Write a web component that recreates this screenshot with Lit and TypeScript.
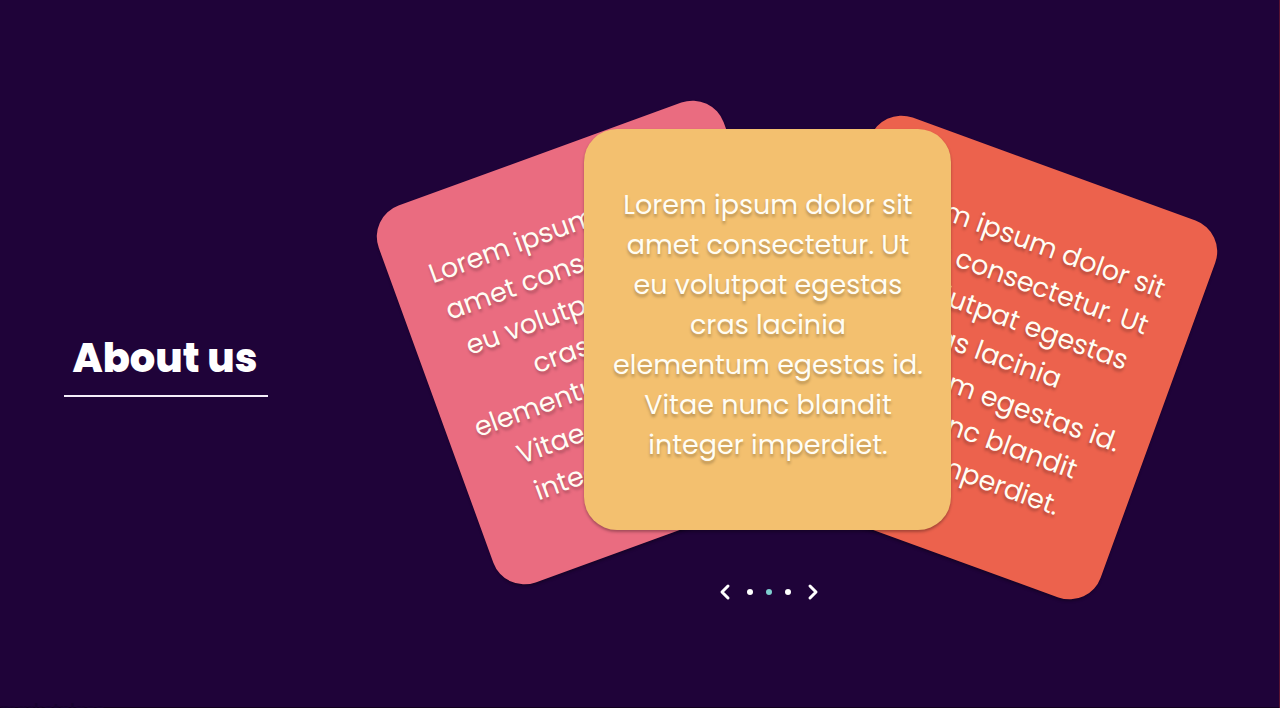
import { LitElement, html, css } from "lit";
import { customElement, property, state } from "lit/decorators.js";
import { classMap } from "lit/directives/class-map.js";

const COPY =
  "Lorem ipsum dolor sit amet consectetur. Ut eu volutpat egestas cras lacinia elementum egestas id. Vitae nunc blandit integer imperdiet.";

@customElement("about-card")
class AboutCard extends LitElement {
  @property() text = "";

  static styles = css`
    :host {
      box-sizing: border-box;
      display: block;
      width: 367px;
      min-height: 401px;
      padding: 56px 24px 64px;
      border-radius: 33px;
      box-shadow: 0 2px 3px rgba(0, 0, 0, 0.3);
    }
    p {
      margin: 0;
      color: #fffdf4;
      font: 400 27px/40px Poppins, Inter, sans-serif;
      text-align: center;
      text-shadow: 0 3px 3px rgba(0, 0, 0, 0.25);
    }
  `;

  render() {
    return html`<p>${this.text}</p>`;
  }
}

@customElement("app-root")
class AppRoot extends LitElement {
  @state() active = 1;

  static styles = css`
    :host {
      box-sizing: border-box;
      display: flex;
      flex-direction: column;
      min-height: 100vh;
      background: #1f0339;
      box-shadow: inset -1px 0 #5a1230, inset 0 -1px #12001f;
      font-family: Poppins, Inter, sans-serif;
      overflow: hidden;
    }
    .page {
      box-sizing: border-box;
      display: grid;
      flex: 1;
      grid-template-columns: 13fr 34fr 3fr;
      align-items: center;
      padding-top: 28px;
    }
    h1 {
      justify-self: center;
      margin: 0;
      padding: 0 11px 10px 8px;
      border-bottom: 2px solid #f4eefa;
      color: #fff;
      font-size: 40px;
      font-weight: 800;
      line-height: 54px;
    }
    .carousel {
      display: grid;
      justify-items: center;
      gap: 55px;
    }
    .deck {
      display: grid;
    }
    .card {
      grid-area: 1 / 1;
    }
    .left {
      background: #ea6c80;
      transform: translate(-159px, 13px) rotate(-20deg);
    }
    .right {
      background: #ec624d;
      transform: translate(218px, 28px) rotate(20deg);
    }
    .front {
      background: #f3c06f;
      z-index: 1;
    }
    nav {
      display: flex;
      align-items: center;
      height: 14px;
      gap: 13px;
      padding-left: 2px;
    }
    button {
      display: grid;
      place-items: center;
      padding: 0;
      border: 0;
      background: none;
      cursor: pointer;
    }
    .arrow {
      width: 18px;
      height: 20px;
    }
    svg {
      display: block;
      fill: none;
      stroke: #fff;
      stroke-width: 3;
      stroke-linecap: round;
      stroke-linejoin: round;
    }
    .dot {
      width: 6px;
      height: 6px;
      border-radius: 50%;
      background: #fff;
    }
    .current {
      background: #7fcfd0;
    }
    footer {
      height: 8px;
      overflow: hidden;
      color: #180230;
      font-size: 16px;
      font-weight: 600;
      line-height: 20px;
    }
  `;

  private go(index: number) {
    this.active = (index + 3) % 3;
  }

  render() {
    return html`
      <main class="page">
        <h1>About us</h1>
        <section class="carousel" aria-label="About us">
          <div class="deck">
            <about-card class="card left" .text=${COPY}></about-card>
            <about-card class="card right" .text=${COPY}></about-card>
            <about-card class="card front" .text=${COPY}></about-card>
          </div>
          <nav aria-label="Slides">
            <button class="arrow" aria-label="Previous" @click=${() => this.go(this.active - 1)}>
              <svg width="12" height="18" viewBox="0 0 12 18"><path d="M9 3 3 9l6 6" /></svg>
            </button>
            ${[0, 1, 2].map(
              (i) => html`<button
                class=${classMap({ dot: true, current: i === this.active })}
                aria-label="Slide ${i + 1}"
                @click=${() => this.go(i)}
              ></button>`
            )}
            <button class="arrow" aria-label="Next" @click=${() => this.go(this.active + 1)}>
              <svg width="12" height="18" viewBox="0 0 12 18"><path d="m3 3 6 6-6 6" /></svg>
            </button>
          </nav>
        </section>
      </main>
      <footer>marketplace</footer>
    `;
  }
}
